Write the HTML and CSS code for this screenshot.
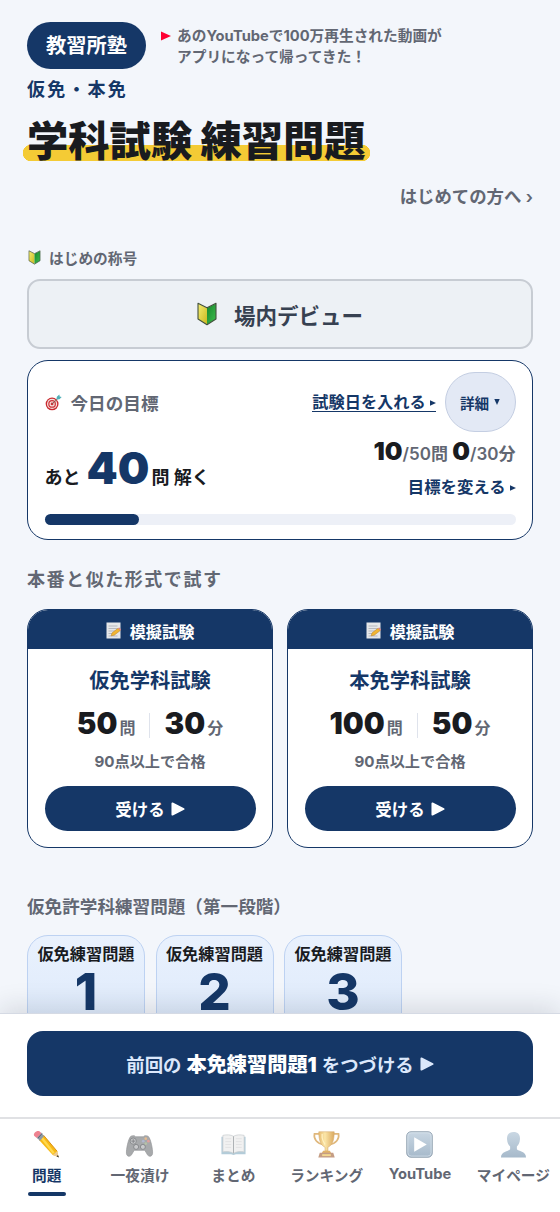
FILE: index.html
```html
<!DOCTYPE html>
<html lang="ja">
<head>
<meta charset="utf-8">
<meta name="viewport" content="width=device-width, initial-scale=1">
<title>学科試験 練習問題</title>
<link rel="stylesheet" href="styles.css">
</head>
<body>
<svg class="defs" aria-hidden="true">
  <defs>
    <linearGradient id="leafY" x1="0" y1="0" x2="1" y2="1"><stop offset="0" stop-color="#f6ee72"/><stop offset="1" stop-color="#c9b81f"/></linearGradient>
    <linearGradient id="leafG" x1="0" y1="0" x2="1" y2="1"><stop offset="0" stop-color="#16852c"/><stop offset="1" stop-color="#3fc04d"/></linearGradient>
    <linearGradient id="gold" x1="0" x2="1"><stop offset="0" stop-color="#e8bd72"/><stop offset=".4" stop-color="#fbe6a8"/><stop offset="1" stop-color="#dba95f"/></linearGradient>
    <linearGradient id="steel" x1="0" y1="0" x2="0" y2="1"><stop offset="0" stop-color="#c9d7e3"/><stop offset="1" stop-color="#a6b9ca"/></linearGradient>
    <symbol id="beginner" viewBox="0 0 20 24">
      <path d="M1 1.5 10 6v16.5L1 17z" fill="url(#leafY)"/>
      <path d="M19 1.5 10 6v16.5l9-5.500z" fill="url(#leafG)"/>
      <path d="M1 1.200 10 5.800l9-4.600V17l-9 5.700L1 17z" fill="none" stroke="#43513c" stroke-width="1.100" stroke-linejoin="round"/>
    </symbol>
    <symbol id="memo" viewBox="0 0 15 17">
      <path d="M.5.500h14v16H.5z" fill="#e6e7e9"/>
      <path d="M2.500 4h9M2.500 6.500h9M2.500 9h7M2.500 11.500h4M2.500 14h9" stroke="#a9adb4" stroke-width=".8"/>
      <path d="m5 13.800 1.200-3 6-4.600 2 2.400-6 4.600z" fill="#f2b632" stroke="#b77c20" stroke-width=".5"/>
      <path d="m12.200 6.200 1.200-.8 1.600 2-.8 1.200z" fill="#e0828a"/>
    </symbol>
  </defs>
</svg>
<div class="app">
  <main class="content">
    <header class="top">
      <div class="brand">教習所塾</div>
      <div class="promo">
        <svg class="promo-mark" viewBox="0 0 10 10"><path d="M0 .5 10 5 0 9.500z" fill="#ff0033"/></svg>
        <p>あのYouTubeで100万再生された動画が<br>アプリになって帰ってきた！</p>
      </div>
    </header>
    <p class="license">仮免・本免</p>
    <h1 class="title"><span>学科試験 練習問題</span></h1>
    <a class="guide">はじめての方へ ›</a>

    <div class="rank-label"><svg viewBox="0 0 20 24"><use href="#beginner"/></svg>はじめの称号</div>
    <div class="rank"><svg viewBox="0 0 20 24"><use href="#beginner"/></svg>場内デビュー</div>

    <section class="goal">
      <div class="goal-head">
        <svg class="target" viewBox="0 0 18 18">
          <circle cx="7.500" cy="10.500" r="6.800" fill="#c92a2f"/><circle cx="7.500" cy="10.500" r="5.400" fill="#f4e3e0"/>
          <circle cx="7.500" cy="10.500" r="4.100" fill="#cf3338"/><circle cx="7.500" cy="10.500" r="2.800" fill="#f4e3e0"/><circle cx="7.500" cy="10.500" r="1.500" fill="#cf3338"/>
          <path d="m7.500 10.500 6-5.600" stroke="#7a5a4e" stroke-width="1"/><path d="m12 5.800.6-3L15.200.500l.3 2.200 2.200.5-2.400 2.400z" fill="#4fb0b8"/>
        </svg>
        <span class="goal-name">今日の目標</span>
        <a class="exam-date">試験日を入れる <svg class="tiny" viewBox="0 0 6 6"><path d="M0 .3 6 3 0 5.700z"/></svg></a>
        <button class="detail">詳細<svg class="tiny" viewBox="0 0 6 6"><path d="M.3 0h5.400L3 6z"/></svg></button>
      </div>
      <div class="goal-body">
        <div class="remain">あと<b>40</b>問 解く</div>
        <div class="stats">
          <p class="counts"><b>10</b>/50問 <b>0</b>/30分</p>
          <a class="change">目標を変える <svg class="tiny" viewBox="0 0 6 6"><path d="M0 .3 6 3 0 5.700z"/></svg></a>
        </div>
      </div>
      <div class="bar"><div class="bar-fill" style="width:20%"></div></div>
    </section>

    <h2 class="section-title">本番と似た形式で試す</h2>
    <div class="exams">
      <article class="exam">
        <div class="exam-tag"><svg viewBox="0 0 15 17"><use href="#memo"/></svg>模擬試験</div>
        <h3>仮免学科試験</h3>
        <div class="figures"><span><b>50</b>問</span><i></i><span><b>30</b>分</span></div>
        <p>90点以上で合格</p>
        <button class="take">受ける<svg class="play" viewBox="0 0 12 12"><path d="M1.200 1.200 10.800 6l-9.600 4.800z"/></svg></button>
      </article>
      <article class="exam">
        <div class="exam-tag"><svg viewBox="0 0 15 17"><use href="#memo"/></svg>模擬試験</div>
        <h3>本免学科試験</h3>
        <div class="figures"><span><b>100</b>問</span><i></i><span><b>50</b>分</span></div>
        <p>90点以上で合格</p>
        <button class="take">受ける<svg class="play" viewBox="0 0 12 12"><path d="M1.200 1.200 10.800 6l-9.600 4.800z"/></svg></button>
      </article>
    </div>

    <h2 class="section-title stage">仮免許学科練習問題（第一段階）</h2>
    <div class="tiles">
      <div class="tile">仮免練習問題<b>1</b></div>
      <div class="tile">仮免練習問題<b>2</b></div>
      <div class="tile">仮免練習問題<b>3</b></div>
    </div>
  </main>

  <footer class="dock">
    <div class="resume-row">
      <button class="resume"><span>前回の</span><b>本免練習問題1</b><span>をつづける</span><svg class="play" viewBox="0 0 12 12"><path d="M1.200 1.200 10.800 6l-9.600 4.800z"/></svg></button>
    </div>
    <nav class="tabs">
      <a class="tab active">
        <svg viewBox="0 0 28 28">
          <path d="m6.500 9.500 4.500-5 14 16.500 1.500 6-6-2z" fill="#f7b916"/><path d="m9 7 12.500 16" stroke="#ffd84d" stroke-width="2.400"/><path d="m11 4.500 14 16.500" stroke="#d98f13" stroke-width="1"/>
          <path d="m20.500 25 4.500-4 1.800 6.300z" fill="#edcb94"/><path d="m24.500 26.400 1.300-1.400 1.200 2.500z" fill="#333"/>
          <path d="m3.800 6.300 4.400-5 3.300 4-4.500 5z" fill="#8e99a5"/><path d="m4.900 7.700 4.500-5" stroke="#5d6874"/><path d="M1.400 5.200C-.8 2.200 4.600-1.500 7 .4l1.600 1.900L3.900 7.300z" fill="#ee8290"/>
        </svg><span>問題</span></a>
      <a class="tab">
        <svg viewBox="0 0 28 28">
          <path d="M5 5.500c2-1 4-1 5 .5h8c1-1.500 3-1.500 5-.5 2.500 2 5 14 4.500 18-.5 3-3.500 3.500-5 1.500l-3-5H8.500l-3 5C4 27 1 26.500.5 23.500 0 19.500 2.500 7.500 5 5.500z" fill="#a7a9ab" stroke="#929497" stroke-width=".7"/>
          <circle cx="7.500" cy="10.500" r="3.300" fill="#c3c5c7" stroke="#898b8e"/><path d="M7.500 8.500v4M5.500 10.500h4" stroke="#858789"/>
          <circle cx="20.500" cy="8" r="1.400" fill="#e6ba8d"/><circle cx="23.200" cy="10.500" r="1.400" fill="#e2a19d"/><circle cx="20.500" cy="13" r="1.400" fill="#b5c3a7"/><circle cx="17.900" cy="10.500" r="1.400" fill="#b1b8cf"/>
          <circle cx="10.500" cy="16.500" r="2.600" fill="#c9cacc" stroke="#85878a"/><circle cx="17.500" cy="16.500" r="2.600" fill="#c9cacc" stroke="#85878a"/>
        </svg><span>一夜漬け</span></a>
      <a class="tab">
        <svg viewBox="0 0 28 28">
          <path d="M1.500 6h25v18h-10l-2.500 1-2.500-1h-10z" fill="#b3ccd9"/>
          <path d="M3 4.500c4-.8 8-.8 11 1 3-1.800 7-1.800 11-1v17.200c-4-.8-8-.4-11 1.500-3-1.900-7-2.300-11-1.500z" fill="#f1f1f1" stroke="#c7cbce" stroke-width=".7"/>
          <path d="M14 5.500v17.700" stroke="#aeb2b5" stroke-width="1.100"/><path d="M5.500 8h6M5.500 11h6M5.500 14h6M5.500 17h6M16.500 8h6M16.500 11h6M16.500 14h6M16.500 17h6" stroke="#dedfe0" stroke-width=".8"/>
        </svg><span>まとめ</span></a>
      <a class="tab">
        <svg viewBox="0 0 28 28">
          <path d="M7 3H1.500C.5 8 4 13 11 14M21 3h5.500C27.500 8 24 13 17 14" fill="none" stroke="#dfb77b" stroke-width="1.700"/>
          <path d="M6 .8h16c0 9-2 14.200-6.500 16v4h-3v-4C8 15 6 9.800 6 .800z" fill="url(#gold)" stroke="#d6ac70" stroke-width=".6"/>
          <path d="M10.500 20.500h7l1.500 2.500H9z" fill="#e1b36a"/><path d="M7 22.500h14l1.500 5h-17z" fill="#c59d84"/><path d="M9.500 24h9v2h-9z" fill="#f3d890"/><path d="M9.500 3v4c.5 3 1.500 5 3 7" fill="none" stroke="#fff1c1" stroke-width="1.300"/>
        </svg><span>ランキング</span></a>
      <a class="tab">
        <svg viewBox="0 0 28 28"><rect x=".7" y=".7" width="26.600" height="26.600" rx="4.500" fill="url(#steel)" stroke="#9aa9b6" stroke-width="1"/><rect x="2" y="2" width="24" height="24" rx="3.500" fill="none" stroke="#d5e0e9" stroke-width=".8"/><path d="M8.500 6.500 21.500 14l-13 7.500z" fill="#fff"/></svg>
        <span class="latin">YouTube</span></a>
      <a class="tab">
        <svg viewBox="0 0 28 28"><path d="M14 1c5 0 7 3.200 6.700 7.500-.2 4-1.700 6-3.200 7.500v3c1.500 2 9.500 2 9.500 8.500H1C1 21 9 21 10.500 19v-3C9 14.500 7.500 12.500 7.300 8.500 7 4.200 9 1 14 1z" fill="url(#steel)"/></svg>
        <span>マイページ</span></a>
    </nav>
  </footer>
</div>
</body>
</html>
```
FILE: styles.css
```css
:root {
  --navy: #153767;
  --ink: #191b1f;
  --muted: #626773;
  --page: #f3f6fb;
}
* { box-sizing: border-box; }
body, h1, h2, h3, p { margin: 0; }
body {
  font-family: Inter, "Noto Sans CJK JP", sans-serif;
  font-weight: 700;
  color: var(--ink);
  background: var(--page);
}
button { font: inherit; border: 0; padding: 0; }
svg { display: block; flex: none; overflow: visible; }
.defs { width: 0; height: 0; position: absolute; }
.app { width: 560px; height: 1212px; display: flex; flex-direction: column; overflow: hidden; }
.content { flex: 1; min-height: 0; overflow: hidden; padding: 22px 27px 0; display: flex; flex-direction: column; }
.content > * { flex: none; }

.top { display: flex; height: 47px; }
.brand {
  width: 119px; height: 47px; line-height: 47px; border-radius: 24px;
  text-align: center; color: #fff; background: var(--navy); font-size: 20.200px;
}
.promo { display: flex; gap: 6px; margin-left: 15px; padding-top: 4px; font-size: 14.700px; line-height: 20.500px; color: var(--muted); white-space: nowrap; }
.promo-mark { width: 10px; height: 10px; margin-top: 5px; }
.license { height: 42px; line-height: 42px; font-size: 18px; letter-spacing: 2.200px; color: var(--navy); }
.title { height: 60px; line-height: 60px; font-size: 41.300px; font-weight: 900; white-space: nowrap; }
.title span {
  display: inline-block; margin-left: -4px; padding: 0 4px;
  background: radial-gradient(circle at 8px 8px, #f4cb35 8px, transparent 8.500px) 0 34px / 16px 16px no-repeat,
    radial-gradient(circle at 8px 8px, #f4cb35 8px, transparent 8.500px) 100% 34px / 16px 16px no-repeat,
    linear-gradient(#f4cb35, #f4cb35) 50% 34px / calc(100% - 16px) 16px no-repeat;
}
.guide { height: 52px; line-height: 52px; text-align: right; font-size: 17.400px; color: var(--muted); font-weight: 600; }
.rank-label { display: flex; align-items: center; gap: 8px; height: 24px; margin-top: 22px; padding-left: 1px; font-size: 14.700px; color: var(--muted); }
.rank-label svg { width: 13px; height: 15px; }
.rank {
  display: flex; align-items: center; justify-content: center; gap: 17px; height: 70px; margin-top: 10px;
  border: 2.500px solid #c7ccd3; border-radius: 13px; background: #edf1f5;
  font-size: 21.500px; color: #374151;
}
.rank svg { width: 20px; height: 24px; }

.goal { height: 180px; margin-top: 11px; padding: 11px 16.500px 0; border: 1.500px solid var(--navy); border-radius: 21px; background: #fff; }
.goal-head { display: flex; align-items: center; height: 60px; }
.target { width: 17px; height: 17px; }
.goal-name { margin-left: 9px; font-size: 17.600px; color: var(--muted); }
.tiny { display: inline-block; width: 6px; height: 6px; fill: currentColor; }
.exam-date { margin-left: auto; color: var(--navy); font-size: 16.200px; line-height: 18px; border-bottom: 1.500px solid var(--navy); }
.exam-date .tiny, .change .tiny { vertical-align: 2px; }
.detail { display: flex; align-items: center; justify-content: center; gap: 5px; width: 71px; height: 60px; margin-left: 9px; border: 1px solid #c4cee2; border-radius: 30px; background: #e3e9f5; color: var(--navy); font-size: 14.600px; }
.goal-body { display: flex; justify-content: space-between; height: 82px; white-space: nowrap; }
.remain { padding-top: 8px; line-height: 56px; font-size: 18px; }
.remain b { margin: 0 2px 0 6px; font-size: 44.500px; font-weight: 900; color: var(--navy); }
.stats { text-align: right; color: var(--muted); font-size: 17px; }
.counts { height: 38px; line-height: 38px; font-weight: 600; }
.counts b { font-size: 25px; font-weight: 900; color: var(--ink); }
.change { display: block; line-height: 34px; font-size: 16.400px; color: var(--navy); }
.bar { height: 11px; border-radius: 6px; background: #edf0f7; }
.bar-fill { height: 11px; border-radius: 6px; background: var(--navy); }

.section-title { height: 40px; line-height: 40px; margin-top: 20px; font-size: 18px; letter-spacing: 1.550px; color: var(--muted); }
.exams { display: grid; grid-template-columns: 1fr 1fr; gap: 14px; margin-top: 9px; }
.exam { height: 239px; padding-bottom: 16px; border: 1.500px solid var(--navy); border-radius: 21px; overflow: hidden; background: #fff; display: flex; flex-direction: column; align-items: center; }
.exam-tag { display: flex; align-items: center; justify-content: center; gap: 9px; width: 100%; height: 39px; padding-top: 2px; font-size: 16.200px; color: #fff; background: var(--navy); }
.exam-tag svg { width: 15px; height: 17px; }
.exam h3 { height: 61px; line-height: 63px; font-size: 20.300px; color: var(--navy); }
.figures { display: flex; align-items: center; gap: 14px; height: 30px; line-height: 30px; font-size: 16px; color: var(--muted); }
.figures b { font-size: 29.500px; font-weight: 900; color: var(--ink); margin-right: 2px; }
.figures i { width: 1px; height: 25px; background: #dfe3ec; }
.exam p { height: 46px; line-height: 44px; font-size: 15.200px; color: var(--muted); }
.take { display: flex; align-items: center; justify-content: center; gap: 6px; width: 211px; height: 45px; border-radius: 23px; background: var(--navy); color: #fff; font-size: 16.500px; }
.play { width: 14px; height: 14px; fill: currentColor; stroke: currentColor; stroke-width: 1.600px; stroke-linejoin: round; }

.stage { margin-top: 39px; font-size: 17.600px; letter-spacing: 0; }
.tiles { display: grid; grid-template-columns: repeat(3, 118px); gap: 10.500px; margin-top: 8px; }
.tile { height: 110px; padding-top: 7px; border: 1.500px solid #bdd2f2; border-radius: 21px; background: linear-gradient(#e9f1fd, #dce9fb); text-align: center; font-size: 16.200px; line-height: 22px; }
.tile b { display: block; font-size: 51px; line-height: 54px; color: var(--navy); font-weight: 800; }

.dock { position: relative; height: 199px; background: #fff; box-shadow: 0 -6px 24px rgba(20, 30, 50, .13); }
.resume-row { height: 104px; padding: 17px 27px 0; border-top: 1.500px solid #d5dae4; }
.resume { display: flex; align-items: center; justify-content: center; width: 506px; height: 65px; border-radius: 16px; background: var(--navy); color: #dce8fb; font-size: 18.400px; }
.resume b { margin: 0 5px; font-size: 20.200px; font-weight: 900; color: #fff; }
.resume .play { margin-left: 6px; }
.tabs { display: grid; grid-template-columns: repeat(6, 1fr); height: 95px; border-top: 2px solid #e0e1e4; }
.tab { display: flex; flex-direction: column; align-items: center; padding-top: 12px; color: var(--muted); font-size: 14.700px; line-height: 22px; white-space: nowrap; }
.tab svg { width: 27px; height: 27px; margin-bottom: 7px; }
.tab .latin { margin-top: -2px; }
.tab.active { color: var(--navy); }
.tab.active::after { content: ""; width: 38px; height: 4px; margin-top: 5px; border-radius: 2px; background: var(--navy); }
```
